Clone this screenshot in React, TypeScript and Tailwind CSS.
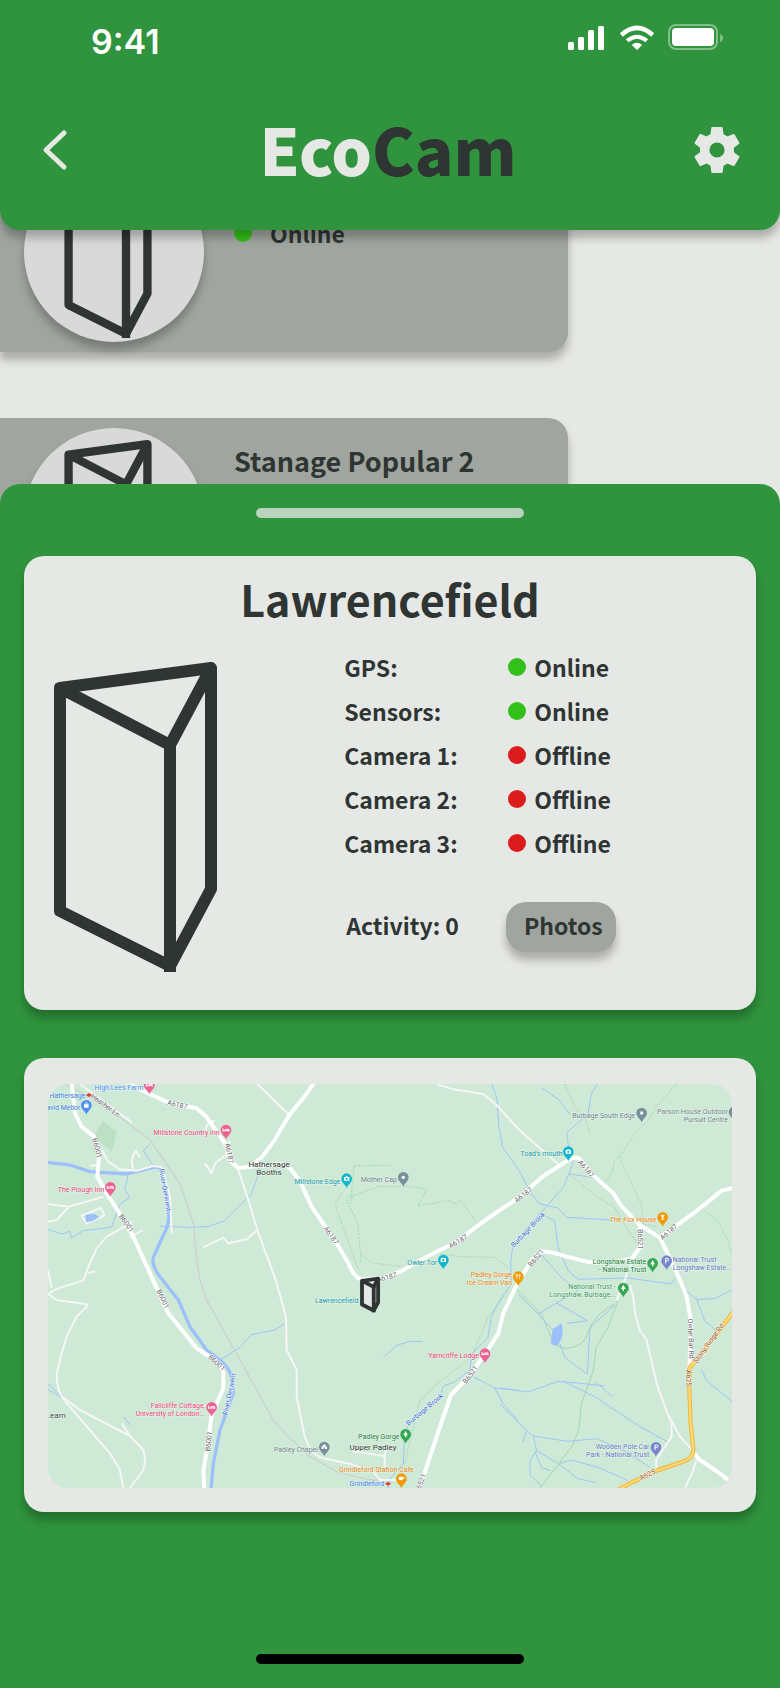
type Sensor = { name: string; online: boolean };

type Pin = {
  x: number;
  y: number;
  kind: keyof typeof pinColors;
};

type MapLabel = {
  x: number;
  y: number;
  lines: string[];
  color: string;
  anchor?: "start" | "middle" | "end";
  size?: number;
};

type RoadLabel = {
  x: number;
  y: number;
  angle: number;
  text: string;
  color?: string;
};

const sensors: Sensor[] = [
  { name: "GPS", online: true },
  { name: "Sensors", online: true },
  { name: "Camera 1", online: false },
  { name: "Camera 2", online: false },
  { name: "Camera 3", online: false },
];

const pinColors = {
  bed: "#f06292",
  shop: "#4f8ff5",
  camera: "#12b5cb",
  place: "#78909c",
  chapel: "#78909c",
  food: "#f29900",
  cafe: "#f29900",
  pub: "#f29900",
  tree: "#34a853",
  parking: "#7986cb",
};

const pins: Pin[] = [
  { x: 304, y: 31, kind: "bed" },
  { x: 115, y: 92, kind: "shop" },
  { x: 534, y: 166, kind: "bed" },
  { x: 187, y: 338, kind: "bed" },
  { x: 896, y: 312, kind: "camera" },
  { x: 1066, y: 308, kind: "place" },
  { x: 1561, y: 231, kind: "camera" },
  { x: 1781, y: 115, kind: "place" },
  { x: 2058, y: 112, kind: "place" },
  { x: 1844, y: 428, kind: "pub" },
  { x: 1186, y: 556, kind: "camera" },
  { x: 1411, y: 606, kind: "food" },
  { x: 1814, y: 566, kind: "tree" },
  { x: 1856, y: 558, kind: "parking" },
  { x: 1726, y: 640, kind: "tree" },
  { x: 1311, y: 837, kind: "bed" },
  { x: 491, y: 998, kind: "bed" },
  { x: 1073, y: 1079, kind: "tree" },
  { x: 829, y: 1117, kind: "chapel" },
  { x: 1060, y: 1212, kind: "cafe" },
  { x: 1824, y: 1118, kind: "parking" },
];

const mapLabels: MapLabel[] = [
  { x: 286, y: 18, lines: ["High Lees Farm"], color: "#4a8af4", anchor: "end" },
  { x: 112, y: 41, lines: ["Hathersage"], color: "#3b78e7", anchor: "end" },
  { x: 97, y: 78, lines: ["David Mellor"], color: "#3b78e7", anchor: "end" },
  { x: 515, y: 152, lines: ["Millstone Country Inn"], color: "#ec407a", anchor: "end" },
  { x: 169, y: 323, lines: ["The Plough Inn"], color: "#ec407a", anchor: "end" },
  { x: 663, y: 249, lines: ["Hathersage", "Booths"], color: "#333333", anchor: "middle", size: 24 },
  { x: 877, y: 300, lines: ["Millstone Edge"], color: "#1297a8", anchor: "end" },
  { x: 1047, y: 294, lines: ["Mother Cap"], color: "#6d7f8e", anchor: "end" },
  { x: 1543, y: 216, lines: ["Toad's mouth"], color: "#1297a8", anchor: "end" },
  { x: 1762, y: 101, lines: ["Burbage South Edge"], color: "#6d7f8e", anchor: "end" },
  { x: 2040, y: 90, lines: ["Parson House Outdoor", "Pursuit Centre"], color: "#6d7f8e", anchor: "end" },
  { x: 1825, y: 414, lines: ["The Fox House"], color: "#f08000", anchor: "end" },
  { x: 1167, y: 543, lines: ["Owler Tor"], color: "#1297a8", anchor: "end" },
  { x: 1392, y: 580, lines: ["Padley Gorge", "Ice Cream Van"], color: "#e8800c", anchor: "end" },
  { x: 1795, y: 540, lines: ["Longshaw Estate", "- National Trust"], color: "#188038", anchor: "end" },
  { x: 1874, y: 534, lines: ["National Trust", "Longshaw Estate..."], color: "#6674c4" },
  { x: 1703, y: 615, lines: ["National Trust -", "Longshaw, Burbage..."], color: "#3f9a5c", anchor: "end" },
  { x: 931, y: 656, lines: ["Lawrencefield"], color: "#1297a8", anchor: "end" },
  { x: 1293, y: 822, lines: ["Yarncliffe Lodge"], color: "#ec407a", anchor: "end" },
  { x: 471, y: 973, lines: ["Fallcliffe Cottage,", "University of London..."], color: "#ec407a", anchor: "end" },
  { x: 0, y: 1003, lines: [".eam"], color: "#444444", size: 24 },
  { x: 1054, y: 1065, lines: ["Padley Gorge"], color: "#188038", anchor: "end" },
  { x: 975, y: 1097, lines: ["Upper Padley"], color: "#333333", anchor: "middle", size: 24 },
  { x: 810, y: 1104, lines: ["Padley Chapel"], color: "#6d7f8e", anchor: "end" },
  { x: 985, y: 1164, lines: ["Grindleford Station Cafe"], color: "#e8800c", anchor: "middle" },
  { x: 1009, y: 1206, lines: ["Grindleford"], color: "#3b78e7", anchor: "end" },
  { x: 1804, y: 1094, lines: ["Wooden Pole Car", "Park - National Trust"], color: "#6674c4", anchor: "end" },
];

const roadLabels: RoadLabel[] = [
  { x: 388, y: 62, angle: 12, text: "A6187" },
  { x: 544, y: 208, angle: 80, text: "A6187" },
  { x: 147, y: 192, angle: 76, text: "B6001" },
  { x: 235, y: 418, angle: 54, text: "B6001" },
  { x: 172, y: 64, angle: 36, text: "Heather Ln" },
  { x: 849, y: 454, angle: 54, text: "A6187" },
  { x: 1230, y: 472, angle: -30, text: "A6187" },
  { x: 1016, y: 580, angle: -14, text: "A6187" },
  { x: 1426, y: 333, angle: -38, text: "A6187" },
  { x: 1614, y: 254, angle: 50, text: "A6187" },
  { x: 1862, y: 444, angle: -40, text: "A6187" },
  { x: 1777, y: 466, angle: 88, text: "B6521" },
  { x: 1464, y: 522, angle: -50, text: "B6521" },
  { x: 345, y: 645, angle: 64, text: "B6001" },
  { x: 506, y: 836, angle: 42, text: "B6001" },
  { x: 482, y: 1072, angle: -84, text: "B6001" },
  { x: 1267, y: 872, angle: -54, text: "B6521" },
  { x: 1120, y: 1192, angle: -68, text: "6521" },
  { x: 1929, y: 764, angle: 88, text: "Owler Bar Rd" },
  { x: 1922, y: 882, angle: 88, text: "A625", color: "#8a4b14" },
  { x: 1798, y: 1172, angle: -24, text: "A625", color: "#8a4b14" },
  { x: 1982, y: 778, angle: -54, text: "Stony Ridge Rd", color: "#8a4b14" },
  { x: 351, y: 318, angle: 80, text: "River Derwent", color: "#2a66c8" },
  { x: 544, y: 930, angle: -78, text: "River Derwent", color: "#2a66c8" },
  { x: 1440, y: 437, angle: -46, text: "Burbage Brook", color: "#2a66c8" },
  { x: 1130, y: 976, angle: -40, text: "Burbage Brook", color: "#2a66c8" },
];

const mainRoads = [
  "M236-4 306 30 361 56 446 73 473 96 496 128 536 186 544 228 571 252 606 248 641 220 676 173 724 93 771 36 798-4",
  "M606 248 700 240 726 253 754 288 791 368 866 478 901 538Q918 580 940 586L1006 582 1056 563 1136 518 1226 473 1306 413 1356 378 1414 340 1486 276 1561 228Q1576 218 1593 223L1631 270 1696 328 1718 363 1771 420 1836 461 1956 373 2021 320 2056 312",
  "M1836 461 1856 503 1896 588 1916 638 1930 718 1924 853",
  "M1776 423 1778 488 1751 523 1696 536 1626 535 1556 518Q1500 500 1480 503L1451 528 1401 613 1366 688 1351 748 1316 803 1266 873 1209 933 1176 1028 1126 1178 1114 1216",
  "M71-4 81 88 101 128 138 158 154 208 148 278 176 328 221 398 256 458 306 568 361 688 446 793 501 828Q526 850 526 870L526 913 491 993 481 1068 466 1163 469 1216",
  "M1936 1106 1956 1128 2016 1168 2040 1188",
];

const minorRoads = [
  "M0 360 61 368 166 338",
  "M0 413 26 408 61 370",
  "M101 395 158 372 170 395 115 418Z",
  "M251 413 226 430 176 458 146 493 121 548 106 590 46 608Q0 624 4 633L26 648 111 660Q122 664 116 668L86 698 56 758 41 808 26 868Q26 920 46 945L91 998 186 1108 216 1158 226 1216",
  "M41 938 96 978 246 1056 286 1098Q296 1130 286 1158L246 1212",
  "M221 1018 246 1056",
  "M11 612 0 560",
  "M120 568 142 562",
  "M161 198 181 233 216 256 266 260 316 246 341 250 366 338 371 448",
  "M256 258Q244 220 264 201L276 220",
  "M126 245 156 242",
  "M96 0 136 30 251 115",
  "M571 258 601 348 628 438 683 588 714 698 716 798 746 858 746 938 766 1038Q780 1110 826 1123L906 1140 976 1163 996 1188 1056 1188",
  "M628 438 596 466 541 478 526 461 466 490",
  "M471 238 491 268 501 238 534 213 545 170",
  "M471 140 480 118 500 110",
  "M628 0 724 93",
  "M1166 0 1216 16 1306 30 1346 63 1414 138 1534 243",
  "M1746 603 1756 640 1761 688 1776 740 1796 768 1826 898 1856 983 1896 1058 1941 1108",
  "M1856 983 1871 1018 1871 1058 1824 1128 1826 1160",
  "M1946 1128 1931 1170 1911 1212",
  "M1776 488 1741 558 1726 600 1706 648",
  "M916 1102 1010 1116 1016 1088M1010 1116 1010 1150",
  "M245 460 284 438",
];

const streams = [
  "M0 436 40 450 66 442 70 462 106 440 190 430 216 360 246 340 230 318 240 276",
  "M336 426 420 430 480 428 530 410 580 360 610 330 628 280 640 220 690 140 708 130",
  "M316 246 286 200 304 182",
  "M516 828 576 790 610 752 680 738 708 720",
  "M1331 0 1346 40 1353 130 1364 190 1414 260 1450 330 1476 360 1530 372 1556 400 1690 408",
  "M1648 0 1630 30 1620 90 1556 146 1564 210 1576 236 1546 310 1500 362 1396 480 1388 530 1390 600 1360 640 1330 698 1320 760 1272 810 1266 858 1220 894 1186 906 1176 940 1100 1000 1070 1040 1066 1140 1030 1180 1020 1212",
  "M1482 12 1536 50 1566 92",
  "M1006 820 1046 784 1086 772 1124 772",
  "M0 900 41 938M0 916 46 944",
  "M228 998 246 1024",
  "M1266 873 1340 912 1416 920M1340 912 1366 960 1410 1010",
  "M1356 912 1440 924 1530 892 1600 898 1670 906M1640 892 1694 938",
  "M1546 892 1640 938 1776 1028 1860 1074",
  "M1356 960 1436 1040 1456 1056 1560 1072 1646 1064 1736 1104 1806 1150",
  "M1456 1056 1466 1100 1530 1138 1590 1184 1646 1196",
  "M1466 1100 1446 1130 1446 1172 1480 1206",
  "M1460 1100 1480 1150 1508 1160",
  "M1536 1138 1570 1128 1650 1150 1740 1190",
  "M1436 1040 1424 1074",
  "M1411 630 1470 690 1516 740M1470 690 1590 620M1524 656 1618 710 1556 718",
  "M1536 780 1550 820 1618 870 1626 730 1700 664",
  "M1910 618 1946 646 2000 644 2056 616M1946 646 1970 710 2006 740",
  "M1960 856 1976 890 2056 956",
  "M1486 394 1520 410 1530 490 1560 560 1590 586 1740 582 1870 600 1880 585",
  "M1476 508 1540 580 1590 620",
  "M1564 270 1620 278 1650 284",
];

const trails = [
  "M914 338 908 350 918 246 1030 244",
  "M900 340 990 308 1080 306 1136 316 1110 366 1200 350 1224 360 1236 350 1260 380 1286 414",
  "M896 346 930 420 940 540M882 324 860 360 900 470 930 552",
  "M940 512 970 536 1060 548",
  "M1176 510 1240 518 1340 520 1380 550",
  "M1886 0 1830 60 1800 110 1760 150 1720 210 1700 230 1690 270 1666 300",
  "M1714 220 1740 276 1780 360 1786 420 1826 428",
  "M1550 0 1580 70 1610 100 1628 150",
  "M1564 270 1650 340 1700 370 1740 440 1770 480",
  "M1960 376 2010 410 2040 470 2052 512",
  "M1380 620 1320 700 1270 820 1166 900 1116 950 1090 1050 1070 1140",
];

// One upright prism: outer shell, top face and the front edge
const PrismLines = ({ stroke, fill }: { stroke: number; fill?: string }) => (
  <g
    fill="none"
    stroke="#2e3532"
    strokeWidth={stroke}
    strokeLinejoin="round"
  >
    <path
      d="M110 298 0 243V20L151 0V221L110 298"
      fill={fill ?? "none"}
    />
    <path d="M0 20 110 77 151 0" />
    <path d={`M110 77V${298 + stroke / 2}`} />
  </g>
);

const PrismBadge = () => (
  <div className="flex size-[180px] shrink-0 items-center justify-center rounded-full bg-[#d9d9d9] shadow-[0_8px_8px_rgba(0,0,0,0.25)]">
    <svg
      className="mt-2 mr-3 h-[164px] w-[88px]"
      viewBox="-8 -8 167 314"
      aria-hidden="true"
    >
      <PrismLines stroke={16} />
    </svg>
  </div>
);

const StatusDot = ({ online }: { online: boolean }) => (
  <span
    className={
      online
        ? "inline-block size-[18px] rounded-full bg-[#34c01a]"
        : "inline-block size-[18px] rounded-full bg-[#dc1c1c]"
    }
  />
);

const SiteCard = ({ name, status }: { name?: string; status?: string }) => (
  <article className="flex h-[200px] w-[568px] gap-[30px] rounded-r-[20px] bg-[#a0a69f] px-6 py-[10px] shadow-[0_8px_8px_rgba(0,0,0,0.25)]">
    <PrismBadge />
    <div className="flex flex-col gap-2 pt-[13px]">
      <div className="h-10">
        {name ? <h2 className="text-[27px] leading-10">{name}</h2> : null}
      </div>
      {status ? (
        <p className="flex items-center gap-[18px] text-[23px] leading-5">
          <StatusDot online />
          {status}
        </p>
      ) : null}
    </div>
  </article>
);

const StatusBar = () => (
  <div className="flex items-start justify-between pt-6 pr-[57px] pl-[91px] text-white">
    <time className="font-['Inter',sans-serif] text-[34px] leading-9 font-semibold">
      9:41
    </time>
    <svg width="156" height="26" viewBox="0 0 156 26" aria-hidden="true">
      <g fill="currentColor">
        <rect x="1" y="18" width="6" height="8" rx="1.5" />
        <rect x="11" y="13" width="6" height="13" rx="1.5" />
        <rect x="21" y="6" width="6" height="20" rx="1.5" />
        <rect x="31" y="2" width="6" height="24" rx="1.5" />
        <path d="M70 26 64.8 21Q70 16.400 75.200 21Z" />
        <rect x="105" y="4" width="42" height="18" rx="4" />
        <path d="M153 10Q156 11 156 14T153 18Z" opacity="0.4" />
      </g>
      <g fill="none" stroke="currentColor">
        <path d="M60.200 16.800Q70 8.600 79.800 16.800" strokeWidth="4" />
        <path d="M54.300 11Q70-3.200 85.700 11" strokeWidth="4.500" />
        <rect
          x="102"
          y="1"
          width="48"
          height="24"
          rx="7"
          strokeWidth="2"
          opacity="0.4"
        />
      </g>
    </svg>
  </div>
);

const Header = () => (
  <header className="relative z-10 rounded-b-[20px] bg-[#2f943d] pb-5 shadow-[0_8px_8px_rgba(0,0,0,0.25)]">
    <StatusBar />
    <div className="mt-[30px] flex h-[120px] items-center justify-between px-10">
      <button type="button" aria-label="Back">
        <svg width="46" height="46" viewBox="0 0 46 46">
          <path
            d="M24 6 6 23 24 40"
            fill="none"
            stroke="#e6e8e5"
            strokeWidth="5"
            strokeLinecap="round"
            strokeLinejoin="round"
          />
        </svg>
      </button>
      <h1 className="pr-1 pb-1 text-[64px] leading-20 font-black text-[#e6e8e5]">
        Eco<span className="text-[#2e3532]">Cam</span>
      </h1>
      <button type="button" aria-label="Settings">
        <svg width="46" height="46" viewBox="-23 -23 46 46">
          <circle
            r="12.300"
            fill="none"
            stroke="#e6e8e5"
            strokeWidth="9.400"
          />
          {[0, 60, 120, 180, 240, 300].map((angle) => (
            <path
              key={angle}
              d="M-5-23H5Q5.600-23 5.700-22L6.600-15V-11H-6.600V-15L-5.700-22Q-5.600-23-5-23Z"
              fill="#e6e8e5"
              transform={`rotate(${angle})`}
            />
          ))}
        </svg>
      </button>
    </div>
  </header>
);

const PinGlyph = ({ kind }: { kind: Pin["kind"] }) => {
  switch (kind) {
    case "bed":
      return <path d="M-9-5V5M-9 2H9V5M9 2V-2H-1V1M-5-2v1" fill="none" stroke="#fff" strokeWidth="3" />;
    case "camera":
      return <path fillRule="evenodd" d="M-8-5H-4L-2-7H2L4-5H8V6H-8ZM0-3A3.500 3.500 0 1 0 0 4 3.500 3.500 0 1 0 0-3Z" fill="#fff" />;
    case "shop":
      return (
        <g>
          <path d="M-7-3H7V7H-7Z" fill="#fff" />
          <path d="M-4-3V-6Q0-10 4-6V-3" fill="none" stroke="#fff" strokeWidth="2" />
        </g>
      );
    case "tree":
      return <path d="M0-10 7 3H2V9H-2V3H-7Z" fill="#fff" />;
    case "food":
      return <path d="M-4-8V8M-7-8V-2H-1V-8M4-8V8M4-7Q8-3 4 1" fill="none" stroke="#fff" strokeWidth="2" />;
    case "cafe":
      return (
        <g>
          <path d="M-8-6H5V0Q4 5-2 5T-8 0Z" fill="#fff" />
          <path d="M5-4H9V0H5" fill="none" stroke="#fff" strokeWidth="2" />
        </g>
      );
    case "pub":
      return <path d="M-7-7H7L2 0V5H5V7H-5V5H-2V0Z" fill="#fff" />;
    case "chapel":
      return <path d="M-8 6V-2H-4V-5L0-9 4-5V-1H8V6H2V1H-2V6Z" fill="#fff" />;
    case "parking":
      return <path d="M-3 8V-7H1Q6-7 6-3T1 1H-3" fill="none" stroke="#fff" strokeWidth="3" />;
    default:
      return <circle r="5" fill="#fff" />;
  }
};

const AreaMap = () => (
  <svg
    className="block w-full rounded-[20px] bg-[#ceead6] font-['Roboto',sans-serif] font-normal"
    viewBox="0 0 2052 1212"
    role="img"
    aria-label="Map of the area around Lawrencefield"
  >
    <path d="M164 110 206 143 191 203 138 158Z" fill="#bde0c4" />
    <g fill="none" strokeLinejoin="round">
      <g stroke="#a3d8ae" strokeWidth="3" strokeDasharray="6 4">
        {trails.map((d) => (
          <path key={d} d={d} />
        ))}
      </g>
      <g stroke="#a3d5ae" strokeWidth="3">
        <path d="M1400 610 1480 690 1510 760Q1520 794 1556 793 1610 790 1622 740 1640 690 1700 660" />
        <path d="M1710 650 1680 730 1644 790 1636 860 1600 960 1592 1040 1570 1090 1476 1212" />
      </g>
      <g stroke="#9fc4f5" strokeWidth="3">
        {streams.map((d) => (
          <path key={d} d={d} />
        ))}
      </g>
      <path
        d="M0 235 66 243 126 263 236 270 316 250Q334 246 340 262L354 308 363 398Q360 430 346 453L316 520Q310 545 336 578L391 648 426 728 476 798 516 828Q548 855 552 885L556 928 516 1038 496 1138 489 1216"
        stroke="#9cc0f9"
        strokeWidth="10"
      />
      <path
        d="M51 0 176 68 306 168 396 298 436 418 446 528 456 588 476 648 576 828 676 1008 716 1053 786 1118 866 1163 956 1186 1020 1190"
        stroke="#cbd2d0"
        strokeWidth="4"
      />
      <g stroke="#f6f5f7" strokeWidth="6">
        {minorRoads.map((d) => (
          <path key={d} d={d} />
        ))}
      </g>
      <g stroke="#ffffff" strokeWidth="12">
        {mainRoads.map((d) => (
          <path key={d} d={d} />
        ))}
      </g>
      <g strokeWidth="13" stroke="#f2b93b">
        <path d="M1712 1216 1756 1193 1826 1160 1906 1133Q1938 1120 1936 1096L1928 1018 1924 918V853L1976 788 2056 684" />
        <path
          d="M1712 1216 1756 1193 1826 1160 1906 1133Q1938 1120 1936 1096L1928 1018 1924 918V853L1976 788 2056 684"
          stroke="#fbdc84"
          strokeWidth="6"
        />
      </g>
    </g>
    <path
      d="M1514 736 1540 718Q1548 740 1540 766L1530 784Q1516 788 1508 778Z"
      fill="#9cc0f9"
    />
    <path d="M112 392 140 390 154 400 132 412 114 414Z" fill="#9cc0f9" />
    <g
      fontSize="21"
      textAnchor="middle"
      stroke="#ffffff"
      strokeWidth="3"
      strokeLinejoin="round"
      paintOrder="stroke"
    >
      {roadLabels.map(({ x, y, angle, text, color }) => (
        <text
          key={`${x}-${y}`}
          transform={`translate(${x} ${y}) rotate(${angle})`}
          dy="7"
          fill={color ?? "#5f6368"}
        >
          {text}
        </text>
      ))}
    </g>
    <g fill="#e53935">
      <path d="M114 33 123 27 132 33 123 39Z" />
      <path d="M1011 1199 1020 1193 1029 1199 1020 1205Z" />
    </g>
    {pins.map(({ x, y, kind }) => (
      <g key={`${x}-${y}`} transform={`translate(${x} ${y})`}>
        <path
          d="M0 0C-3-10-16-16-16-28A16 16 0 1 1 16-28C16-16 3-10 0 0Z"
          fill={pinColors[kind]}
        />
        <g transform="translate(0 -28)">
          <PinGlyph kind={kind} />
        </g>
      </g>
    ))}
    <g
      stroke="#e9f6ec"
      strokeWidth="3"
      strokeLinejoin="round"
      paintOrder="stroke"
    >
      {mapLabels.map(({ x, y, lines, color, anchor, size }) => (
        <text
          key={`${x}-${y}`}
          fontSize={size ?? 21}
          textAnchor={anchor ?? "start"}
          fill={color}
        >
          {lines.map((line, i) => (
            <tspan key={line} x={x} y={y + i * 24}>
              {line}
            </tspan>
          ))}
        </text>
      ))}
    </g>
    <g transform="translate(942 584) scale(0.32)">
      <PrismLines stroke={36} fill="#e6e8e5" />
    </g>
  </svg>
);

const SiteDetails = () => (
  <section className="h-[454px] rounded-[20px] bg-[#e6e8e5] pt-2 shadow-[0_8px_8px_rgba(0,0,0,0.25)]">
    <h2 className="text-center text-[43px] leading-[68px]">Lawrencefield</h2>
    <div className="grid grid-cols-[7fr_9fr]">
      <svg
        className="mt-[30px] ml-[30px] h-[310px] w-[163px]"
        viewBox="-6 -6 163 310"
        aria-hidden="true"
      >
        <PrismLines stroke={12} />
      </svg>
      <div className="pt-[13px] text-[23px] leading-[44px]">
        <table>
          <tbody>
            {sensors.map(({ name, online }) => (
              <tr key={name}>
                <th scope="row" className="w-[164px] p-0 text-left">
                  {name}:
                </th>
                <td className="p-0">
                  <div className="flex items-center gap-2">
                    <StatusDot online={online} />
                    {online ? "Online" : "Offline"}
                  </div>
                </td>
              </tr>
            ))}
          </tbody>
        </table>
        <div className="mt-[37px] flex items-center pl-0.5">
          <p className="w-[160px] pb-1">Activity: 0</p>
          <button
            type="button"
            className="h-[50px] w-[110px] rounded-[20px] bg-[#a0a69f] pb-1 pl-1 shadow-[0_8px_8px_rgba(0,0,0,0.25)]"
          >
            Photos
          </button>
        </div>
      </div>
    </div>
  </section>
);

const App = () => {
  return (
    <div className="flex min-h-screen flex-col overflow-hidden bg-[#e6e8e5] font-['Noto_Sans_CJK_SC',sans-serif] font-bold text-[#2e3532]">
      <Header />
      <div className="-mt-5 h-[294px] overflow-hidden">
        <div className="-mt-[58px] flex flex-col gap-[66px]">
          <SiteCard status="Online" />
          <SiteCard name="Stanage Popular 2" />
        </div>
      </div>
      <main className="relative -mt-5 flex flex-1 flex-col rounded-t-[20px] bg-[#2f943d] px-6 pt-6 pb-6">
        <div className="mb-[38px] h-[10px] w-[268px] self-center rounded-full bg-[#b9d3bc]" />
        <div className="flex flex-col gap-12">
          <SiteDetails />
          <section className="rounded-[20px] bg-[#e6e8e5] px-6 pt-[26px] pb-6 shadow-[0_8px_8px_rgba(0,0,0,0.25)]">
            <AreaMap />
          </section>
        </div>
        <div className="mt-auto h-[10px] w-[268px] self-center rounded-full bg-black" />
      </main>
    </div>
  );
};

export default App;
